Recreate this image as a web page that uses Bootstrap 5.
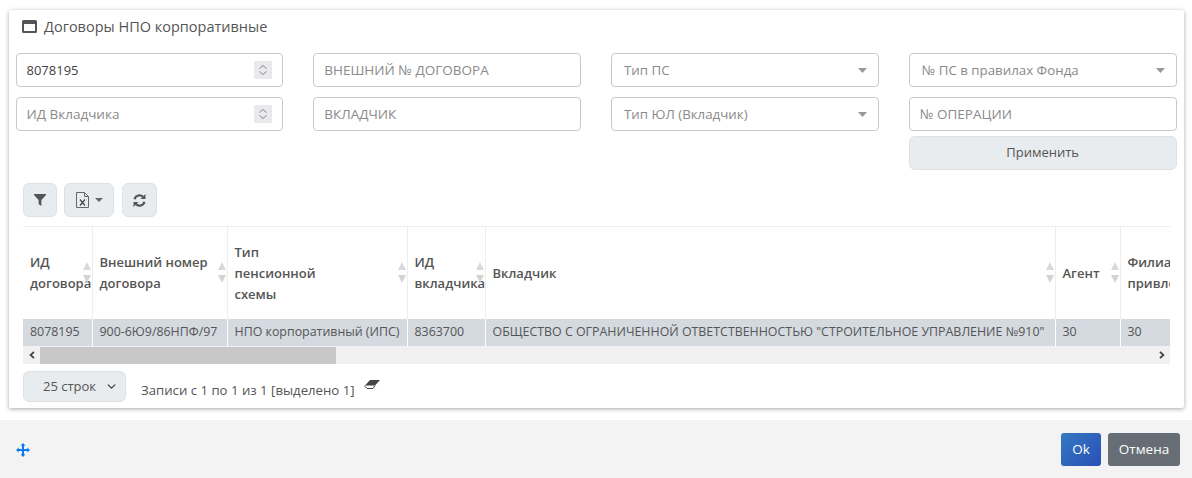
<!DOCTYPE html>
<html lang="ru">
<head>
    <meta charset="UTF-8">
    <meta name="viewport" content="width=device-width, initial-scale=1.0">
    <title>Договоры НПО корпоративные</title>
    <link href="https://cdn.jsdelivr.net/npm/bootstrap@5.3.0/dist/css/bootstrap.min.css" rel="stylesheet">
    <style>
        html, body { height: 100%; }
        body {
            background: #fff;
            font-family: "Open Sans", "Noto Sans", sans-serif;
            font-size: 13px;
            color: #555;
            overflow: hidden;
        }
        .dlg-card {
            margin: 10px 8px 0 9px;
            height: 398px;
            border: 0;
            border-radius: 2px;
            box-shadow: 0 1px 4px rgba(0,0,0,.35);
            padding: 0 7.5px 0 6.5px;
        }
        .dlg-title {
            height: 43px;
            padding: 0 0 10px 6.5px;
            font-size: 14.5px;
            color: #555;
            gap: 7px;
        }
        .filter-grid {
            display: grid;
            grid-template-columns: repeat(4, 1fr);
            column-gap: 30px;
            row-gap: 10px;
        }
        .filter-grid .form-control, .filter-grid .form-select {
            height: 34px;
            font-size: 13px;
            padding: 0 10px;
            border-color: #c9c9c9;
            border-radius: 4px;
            color: #444;
        }
        .filter-grid .form-control::placeholder { color: #8a8a8a; font-size: 13.5px; }
        .filter-grid input[type=number]::-webkit-inner-spin-button {
            -webkit-appearance: none;
            appearance: none;
            opacity: 1;
            width: 18px;
            height: 18px;
            background: #e9e9ee url("data:image/svg+xml,%3csvg xmlns='http://www.w3.org/2000/svg' width='18' height='18'%3e%3cpath fill='none' stroke='%23888' d='M5.500 7.500L9 4.500l3.500 3M5.500 10.500L9 13.500l3.500-3'/%3e%3c/svg%3e") no-repeat center;
        }
        .filter-grid .form-select {
            color: #8a8a8a;
            font-size: 13.3px;
            padding: 1px 0 0 12px;
            background-image: url("data:image/svg+xml,%3csvg xmlns='http://www.w3.org/2000/svg' width='9' height='5'%3e%3cpath fill='%23999' d='M0 0h9L4.500 5z'/%3e%3c/svg%3e");
            background-size: 9px 5px;
            background-position: right 11px center;
        }
        .apply-btn {
            grid-column: 4;
            height: 34px;
            margin-top: -5px;
            font-size: 13px;
            padding: 0;
            background: #e9ecef;
            border-color: #dee2e6;
            color: #555;
        }
        .tool-bar { padding: 13px 0 0 7.500px; gap: 7px; height: 56px; }
        .tool-btn {
            height: 34px;
            background: #e9ecef;
            border-color: #dee2e6;
            color: #555;
            padding: 0;
            gap: 6px;
        }
        .refresh-btn { margin-left: 1px; }
        .caret-dn { width: 0; height: 0; border: 4px solid transparent; border-top-color: #666; border-bottom: 0; }
        .tbl-wrap { margin-left: 7.500px; width: 1147px; overflow: hidden; border-top: 1px solid #eee; }
        .data-tbl {
            table-layout: fixed;
            width: 1299px;
            margin: 0;
            border-collapse: collapse;
        }
        .data-tbl th {
            height: 92px;
            padding: 0 7px;
            font-size: 13px;
            line-height: 21px;
            font-weight: 600;
            color: #555;
            vertical-align: middle;
            border: 0;
            border-right: 1px solid #eee;
            position: relative;
            white-space: nowrap;
        }
        .data-tbl th::before, .data-tbl th::after {
            content: "";
            position: absolute;
            right: 1px;
            border: 4.5px solid transparent;
        }
        .data-tbl th::before { top: 35px; border-bottom: 8px solid #d9d9d9; border-top: 0; }
        .data-tbl th::after { top: 48px; border-top: 8px solid #d3d3d3; border-bottom: 0; }
        .data-tbl th.no-sort::before, .data-tbl th.no-sort::after { display: none; }
        .data-tbl td {
            height: 27px;
            padding: 0 7px;
            font-size: 12.4px;
            background: #d4dadf;
            color: #555;
            border: 0;
            border-right: 1px solid #fff;
            white-space: nowrap;
            vertical-align: middle;
        }
        .scroll-bar { width: 1147px; margin-left: 7.500px; height: 18px; background: #f1f1f1; }
        .scroll-arrow { width: 17px; height: 18px; }
        .scroll-thumb { width: 296px; height: 17px; background: #c8c8c8; margin-top: 1px; }
        .pager { padding: 7px 0 0 7.500px; }
        .pager .form-select {
            width: 103px;
            height: 31px;
            font-size: 13px;
            padding: 0 0 0 19px;
            background-color: #e9ecef;
            border-color: #dee2e6;
            color: #555;
            background-size: 11px 9px;
            background-position: right 8px center;
        }
        .pager-info { margin: 10px 0 0 15px; font-size: 13.2px; color: #555; }
        .eraser-ico { margin: 9px 0 0 9px; }
        .dlg-foot {
            margin-top: 12px;
            height: 58px;
            background: #f3f3f3;
            padding: 13px 12px 0 16px;
        }
        .move-ico { margin-top: 10px; }
        .foot-btn { height: 33px; font-size: 13.5px; padding: 0; border-radius: 3px; color: #fff; border: 0; }
        .ok-btn { width: 40px; background: linear-gradient(135deg, #3479c0, #2a4fb8); margin-right: 7px; }
        .cancel-btn { width: 72px; background: #666d75; }
        .ok-btn:hover, .cancel-btn:hover { color: #fff; }
    </style>
</head>
<body>
    <div class="card dlg-card">
        <div class="dlg-title d-flex align-items-center">
            <svg width="15" height="13" viewBox="0 0 15 13"><path fill="#555" fill-rule="evenodd" d="M1.5 0h12A1.5 1.5 0 0 1 15 1.5v10a1.5 1.5 0 0 1-1.5 1.5h-12A1.5 1.5 0 0 1 0 11.5v-10A1.5 1.5 0 0 1 1.5 0zM2 4v7h11V4z"/></svg>
            <span>Договоры НПО корпоративные</span>
        </div>

        <form class="filter-grid">
            <input type="number" class="form-control" value="8078195">
            <input type="text" class="form-control" placeholder="ВНЕШНИЙ № ДОГОВОРА">
            <select class="form-select"><option>Тип ПС</option></select>
            <select class="form-select"><option>№ ПС в правилах Фонда</option></select>
            <input type="number" class="form-control" placeholder="ИД Вкладчика">
            <input type="text" class="form-control" placeholder="ВКЛАДЧИК">
            <select class="form-select"><option>Тип ЮЛ (Вкладчик)</option></select>
            <input type="text" class="form-control" placeholder="№ ОПЕРАЦИИ">
            <button type="button" class="btn apply-btn">Применить</button>
        </form>

        <div class="tool-bar d-flex">
            <button type="button" class="btn tool-btn d-flex align-items-center justify-content-center" style="width:34px">
                <svg width="12" height="12" viewBox="0 0 12 12"><path fill="#555" d="M0 0h12v1L7.4 6v6L4.6 10V6L0 1z"/></svg>
            </button>
            <button type="button" class="btn tool-btn d-flex align-items-center justify-content-center" style="width:50px">
                <svg width="13" height="16" viewBox="0 0 13 16"><path fill="none" stroke="#666" d="M.5.5h8l4 4v11H.5zM8.500.5v4h4"/><path fill="none" stroke="#444" stroke-width="1.2" d="M4 7.500l5 6M9 7.500l-5 6"/></svg>
                <span class="caret-dn"></span>
            </button>
            <button type="button" class="btn tool-btn refresh-btn d-flex align-items-center justify-content-center" style="width:35px">
                <svg width="13" height="13" viewBox="0 0 13 13"><path fill="none" stroke="#555" stroke-width="2.200" d="M1.600 5.200A5 5 0 0 1 10.200 3M11.400 7.800A5 5 0 0 1 2.800 10"/><path fill="#555" d="M12.500 0v5h-5zM.5 13V8h5z"/></svg>
            </button>
        </div>

        <div class="tbl-wrap">
            <table class="table data-tbl">
                <colgroup>
                    <col style="width:69px"><col style="width:135px"><col style="width:180px"><col style="width:78px"><col style="width:570px"><col style="width:65px"><col style="width:202px">
                </colgroup>
                <thead>
                    <tr>
                        <th>ИД<br>договора</th>
                        <th>Внешний номер<br>договора</th>
                        <th>Тип<br>пенсионной<br>схемы</th>
                        <th>ИД<br>вкладчика</th>
                        <th>Вкладчик</th>
                        <th>Агент</th>
                        <th class="no-sort">Филиал<br>привлечения</th>
                    </tr>
                </thead>
                <tbody>
                    <tr>
                        <td>8078195</td>
                        <td>900-6Ю9/86НПФ/97</td>
                        <td>НПО корпоративный (ИПС)</td>
                        <td>8363700</td>
                        <td>ОБЩЕСТВО С ОГРАНИЧЕННОЙ ОТВЕТСТВЕННОСТЬЮ "СТРОИТЕЛЬНОЕ УПРАВЛЕНИЕ №910"</td>
                        <td>30</td>
                        <td>30</td>
                    </tr>
                </tbody>
            </table>
        </div>
        <div class="scroll-bar d-flex">
            <div class="scroll-arrow d-flex align-items-center justify-content-center">
                <svg width="6" height="8" viewBox="0 0 6 8"><path fill="none" stroke="#444" stroke-width="1.8" d="M5 .8L1.600 4 5 7.200"/></svg>
            </div>
            <div class="scroll-thumb"></div>
            <div class="scroll-arrow d-flex align-items-center justify-content-center ms-auto">
                <svg width="6" height="8" viewBox="0 0 6 8"><path fill="none" stroke="#444" stroke-width="1.8" d="M1 .8L4.400 4 1 7.200"/></svg>
            </div>
        </div>

        <div class="pager d-flex align-items-start">
            <select class="form-select"><option>25 строк</option></select>
            <span class="pager-info">Записи с 1 по 1 из 1 [выделено 1]</span>
            <svg class="eraser-ico" width="16" height="9" viewBox="0 0 16 9"><path fill="#444" d="M6 0h10L11 5.500H1z"/><path fill="none" stroke="#444" d="M1 5.500L.7 6 3 8.500h6l2-3"/></svg>
        </div>
    </div>

    <div class="dlg-foot d-flex align-items-start">
        <svg class="move-ico" width="14" height="14" viewBox="0 0 14 14"><path fill="#0d7bf0" d="M7 0l2.500 2.700H8v3.300h3.300V4.500L14 7l-2.700 2.500V8H8v3.300h1.500L7 14l-2.500-2.700H6V8H2.700v1.500L0 7l2.700-2.500V6H6V2.700H4.500z"/></svg>
        <button type="button" class="btn foot-btn ok-btn ms-auto">Ok</button>
        <button type="button" class="btn foot-btn cancel-btn">Отмена</button>
    </div>

    <script src="https://cdn.jsdelivr.net/npm/bootstrap@5.3.0/dist/js/bootstrap.bundle.min.js"></script>
</body>
</html>
